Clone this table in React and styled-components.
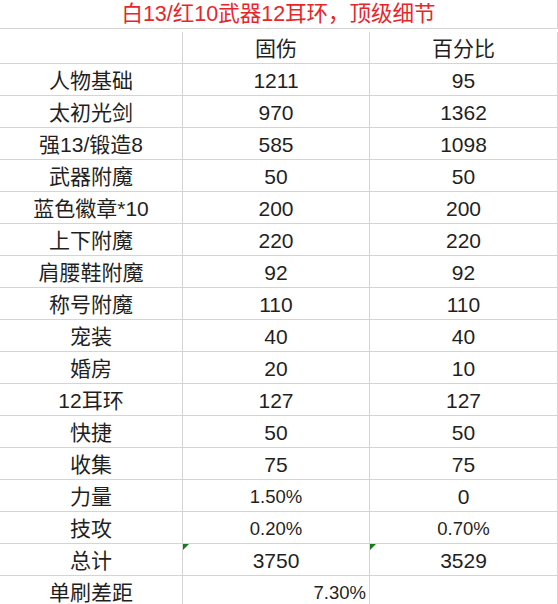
import { Fragment } from 'react'
import styled, { createGlobalStyle } from 'styled-components'

const GlobalStyle = createGlobalStyle`
  html, body {
    margin: 0;
    padding: 0;
    background: #ffffff;
  }
  body {
    font-family: "Liberation Sans", "Noto Sans CJK SC", Arial, sans-serif;
    color: #1f1f1f;
  }
`

const rows = [
  ['人物基础', '1211', '95'],
  ['太初光剑', '970', '1362'],
  ['强13/锻造8', '585', '1098'],
  ['武器附魔', '50', '50'],
  ['蓝色徽章*10', '200', '200'],
  ['上下附魔', '220', '220'],
  ['肩腰鞋附魔', '92', '92'],
  ['称号附魔', '110', '110'],
  ['宠装', '40', '40'],
  ['婚房', '20', '10'],
  ['12耳环', '127', '127'],
  ['快捷', '50', '50'],
  ['收集', '75', '75'],
  ['力量', '1.50%', '0'],
  ['技攻', '0.20%', '0.70%'],
]

const Sheet = styled.div`
  display: grid;
  grid-template-columns: 183px 187px 188px;
  grid-auto-rows: 32px;
  width: 558px;
  height: 604px;
  overflow: hidden;
`

const Title = styled.div`
  grid-column: 1 / span 3;
  height: 29px;
  box-sizing: border-box;
  border-right: 1px solid #d4d4d4;
  border-bottom: 1px solid #d4d4d4;
  display: flex;
  align-items: center;
  justify-content: center;
  color: #e8262a;
  font-size: 21.5px;
  line-height: 1.15;
  padding-top: 1px;
`

const Cell = styled.div`
  position: relative;
  box-sizing: border-box;
  border-right: 1px solid #d4d4d4;
  border-bottom: 1px solid #d4d4d4;
  display: flex;
  align-items: center;
  justify-content: ${(p) => (p.$right ? 'flex-end' : 'center')};
  padding: ${(p) => (p.$right ? '3px 3px 0 0' : '3px 0 0 0')};
  font-size: ${(p) => (p.$small ? '18.5px' : '21px')};
  line-height: 1.15;
  white-space: nowrap;
`

// little green "number stored as text" marker, like in excel
const Flag = styled.span`
  position: absolute;
  top: 0;
  left: 0;
  width: 0;
  height: 0;
  border-top: 6px solid #1a7a1a;
  border-right: 6px solid transparent;
`

const isPct = (v) => v.endsWith('%')

const App = () => {
  return (
    <>
      <GlobalStyle />
      <Sheet>
        <Title>白13/红10武器12耳环，顶级细节</Title>
        <Cell />
        <Cell>固伤</Cell>
        <Cell>百分比</Cell>
        {rows.map(([name, fixed, pct]) => (
          <Fragment key={name}>
            <Cell>{name}</Cell>
            <Cell $small={isPct(fixed)}>{fixed}</Cell>
            <Cell $small={isPct(pct)}>{pct}</Cell>
          </Fragment>
        ))}
        <Cell>总计</Cell>
        <Cell>
          <Flag />
          3750
        </Cell>
        <Cell>
          <Flag />
          3529
        </Cell>
        <Cell>单刷差距</Cell>
        <Cell $right $small>7.30%</Cell>
        <Cell />
      </Sheet>
    </>
  )
}

export default App
